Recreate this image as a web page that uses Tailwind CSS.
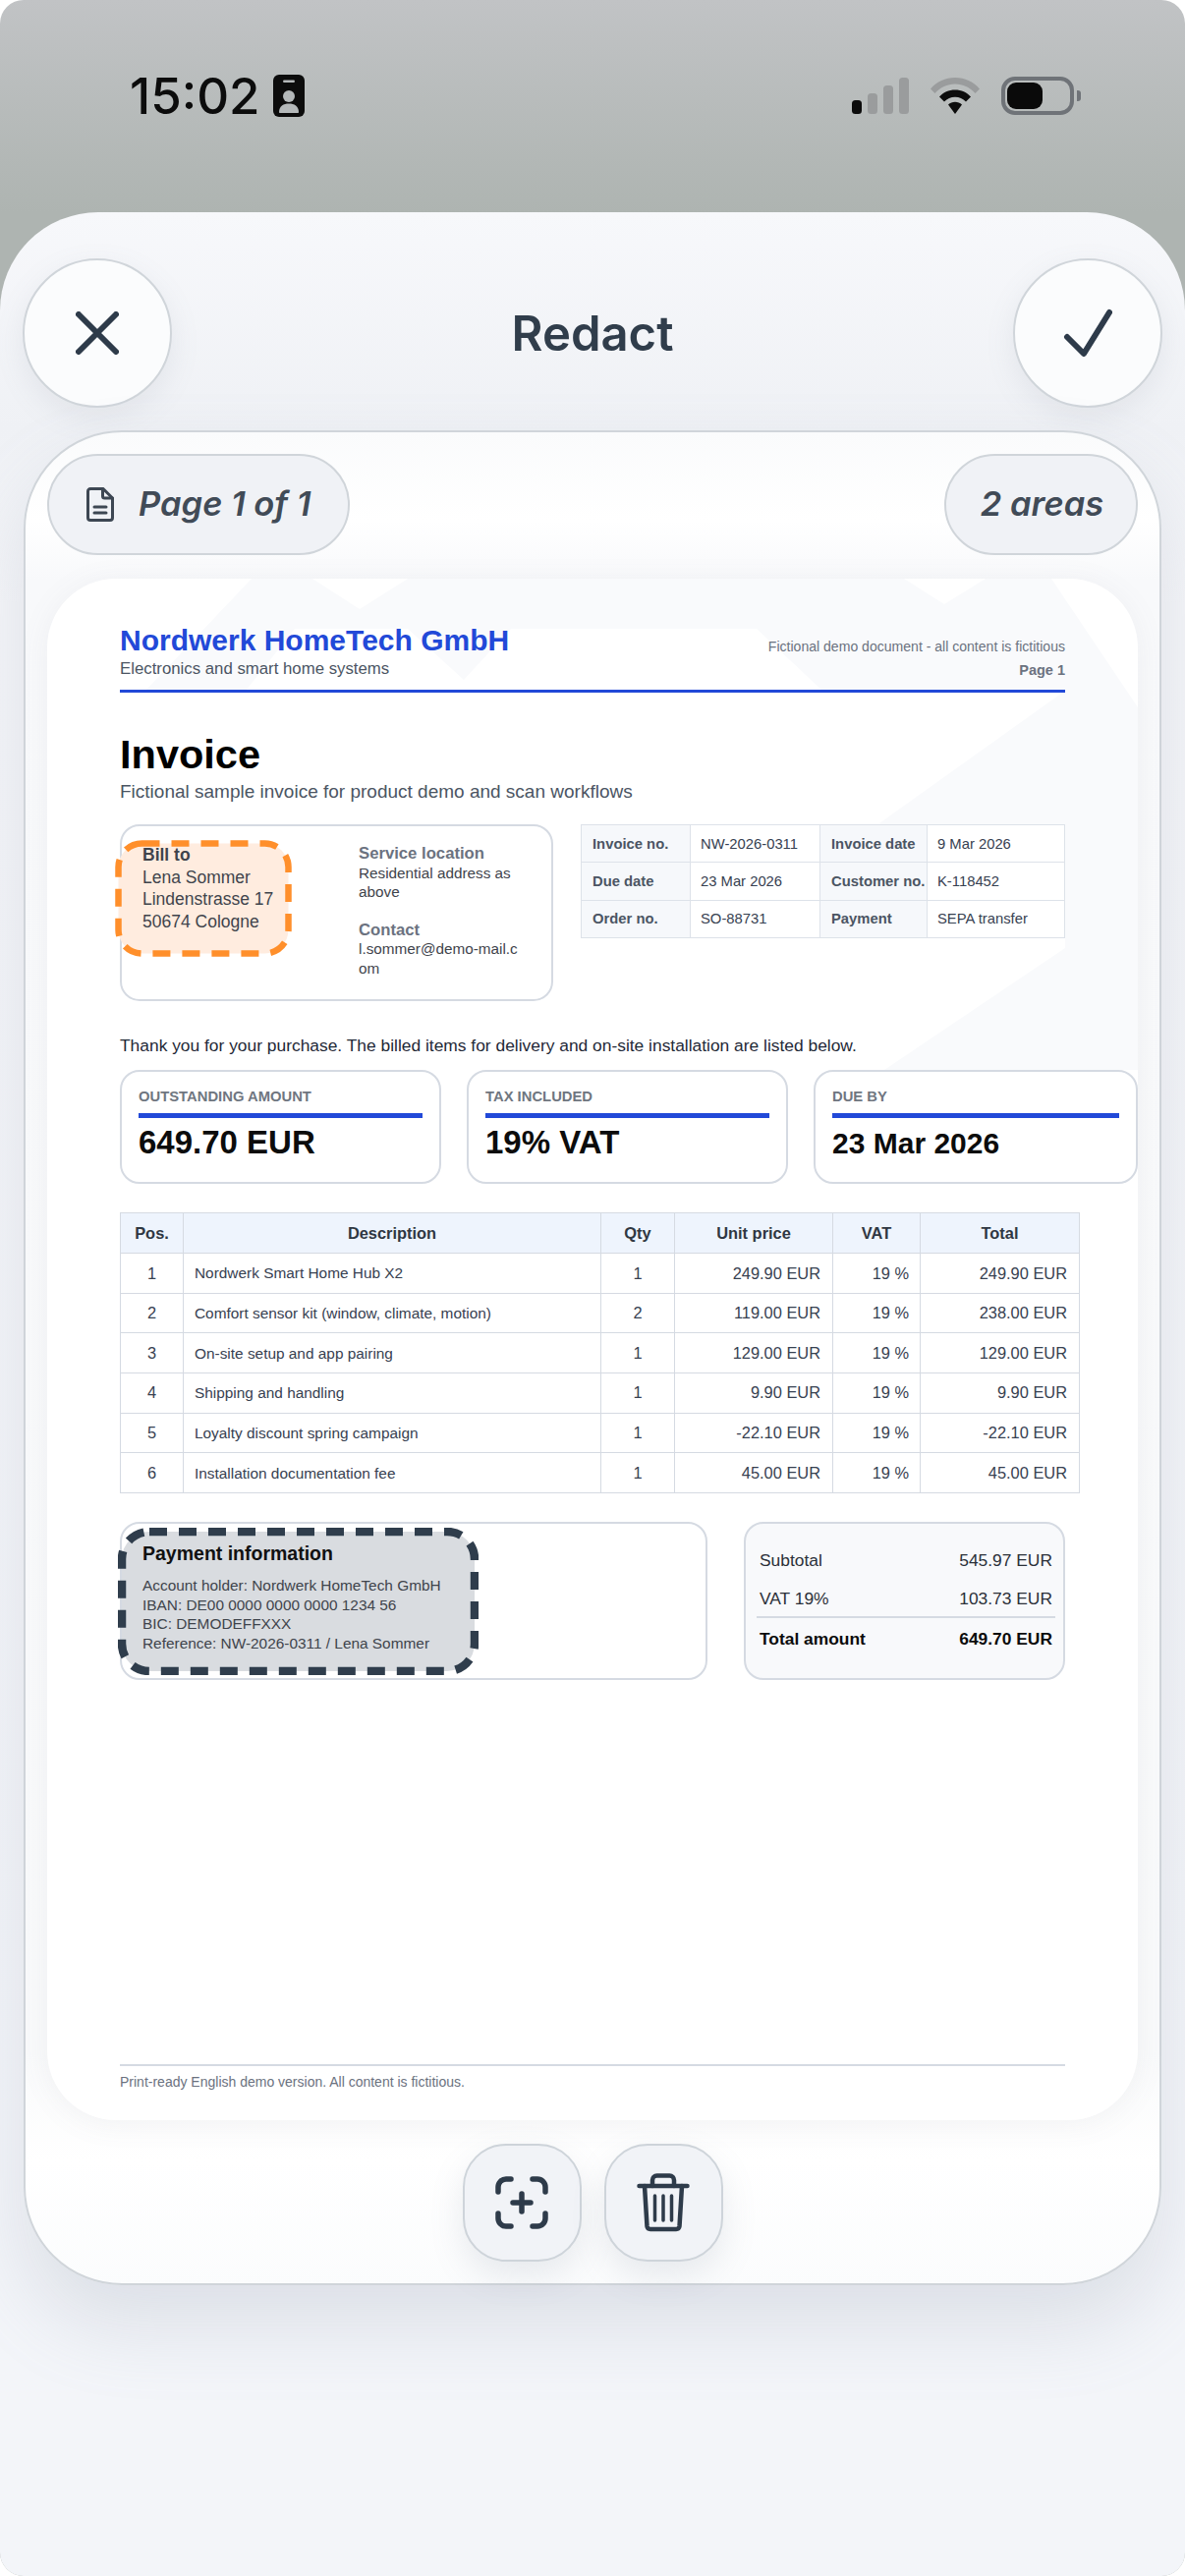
<!DOCTYPE html>
<html lang="en">
  <head>
    <meta charset="UTF-8" />
    <meta name="viewport" content="width=device-width, initial-scale=1.0" />
    <title>Redact</title>
    <script src="https://cdn.jsdelivr.net/npm/@tailwindcss/browser@4"></script>
  </head>
  <body class="bg-white">
    <div class="w-[1206px] h-[2622px] rounded-[24px] overflow-hidden flex flex-col bg-[linear-gradient(180deg,#c1c3c5_0px,#aeb4b1_216px)] font-['Inter',sans-serif]">
      <!-- Status bar -->
      <div class="h-[216px] shrink-0 relative">
        <div class="flex items-center justify-between pl-[132px] pr-[106px] pt-[76px]">
          <div class="flex items-center gap-[13px]">
            <span class="text-[51px] leading-[43px] font-medium text-[#0c0c0c]">15:02</span>
            <svg class="w-[32px] h-[43px]" viewBox="0 0 32 43">
              <rect width="32" height="43" rx="6" fill="#0c0c0c" />
              <rect x="10" y="5.500" width="12" height="2.500" rx="1.200" fill="#b4b8b9" />
              <circle cx="16" cy="22" r="6" fill="#b4b8b9" />
              <path d="M6 38c0-6 4.500-8.500 10-8.500S26 32 26 38c0 .6-.4 1-1 1H7c-.6 0-1-.4-1-1z" fill="#b4b8b9" />
            </svg>
          </div>
          <div class="flex items-center gap-[22px]">
            <svg class="w-[58px] h-[37px]" viewBox="0 0 58 37">
              <rect x="0" y="23" width="10" height="14" rx="3.500" fill="#0c0c0c" />
              <rect x="16" y="16" width="10" height="21" rx="3.500" fill="#9a9c9d" />
              <rect x="32" y="8" width="10" height="29" rx="3.500" fill="#9a9c9d" />
              <rect x="48" y="0" width="10" height="37" rx="3.500" fill="#9a9c9d" />
            </svg>
            <svg class="w-[50px] h-[37px]" viewBox="0 0 50 37">
              <path d="M0 11.500C6.500 4 15 0 25 0s18.500 4 25 11.500l-4.500 4.500C40 10 33 6.500 25 6.500S10 10 4.500 16z" fill="#9a9c9d" />
              <path d="M9 19.500C13 15 18.500 12.500 25 12.500s12 2.500 16 7l-5 5C33 21.500 29.300 19.700 25 19.700s-8 1.800-11 4.800z" fill="#0c0c0c" />
              <path d="M18 27.500c2-1.800 4.300-2.700 7-2.700s5 .9 7 2.700l-7 9.500z" fill="#0c0c0c" />
            </svg>
            <div class="flex items-center gap-[3px]">
              <div class="w-[74px] h-[39px] rounded-[14px] border-[4px] border-[#6f7378] p-[2px]">
                <div class="w-[36px] h-full rounded-[9px] bg-[#0a0a0a]"></div>
              </div>
              <div class="w-[4px] h-[11px] rounded-r-[3px] bg-[#6f7378]"></div>
            </div>
          </div>
        </div>
      </div>

      <!-- Sheet -->
      <div class="flex-1 rounded-t-[100px] bg-[linear-gradient(180deg,#f7f8fb_0px,#eff1f5_220px,#f5f6f9_400px,#f3f5f9_2000px)] px-[24px] flex flex-col">
        <!-- Top bar -->
        <div class="pt-[47px] flex items-center justify-between -mx-[1px]">
          <button class="w-[152px] h-[152px] rounded-full bg-[#fbfcfd] border-[2.500px] border-[#d0d5da] shadow-[0_10px_30px_rgba(120,130,145,0.12)] flex items-center justify-center">
            <svg class="w-[44px] h-[44px]" viewBox="0 0 44 44" fill="none" stroke="#2e3b4a" stroke-width="6" stroke-linecap="round"><path d="M3 3l38 38M41 3L3 41" /></svg>
          </button>
          <h1 class="text-[49px] leading-none font-semibold text-[#303d4b]">Redact</h1>
          <button class="w-[152px] h-[152px] rounded-full bg-[#fbfcfd] border-[2.500px] border-[#d0d5da] shadow-[0_10px_30px_rgba(120,130,145,0.12)] flex items-center justify-center">
            <svg class="w-[50px] h-[50px]" viewBox="0 0 50 50" fill="none" stroke="#2e3b4a" stroke-width="6" stroke-linecap="round" stroke-linejoin="round"><path d="M4 29l17 17L47 4" /></svg>
          </button>
        </div>

        <!-- Card -->
        <div class="mt-[23px] h-[1888px] rounded-[100px] border-[2.500px] border-[#d0d5da] bg-[linear-gradient(180deg,#fafbfc_0px,#ffffff_90px,#f8f9fb_150px,#f9fafb_1650px,#ffffff_1760px,#fbfcfd_1888px)] px-[22px] pt-[22px] shadow-[0_40px_80px_rgba(130,140,160,0.2)] flex flex-col">
          <!-- Pills -->
          <div class="flex items-center justify-between">
            <div class="w-[308px] h-[103px] rounded-full border-[2.500px] border-[#d0d5da] bg-[#f0f2f6] pl-[38px] flex items-center gap-[25px]">
              <svg class="w-[28px] h-[35px]" viewBox="0 0 28 35" fill="none" stroke="#3d4753" stroke-width="3" stroke-linecap="round" stroke-linejoin="round">
                <path d="M4 1.500h13l9.500 9.500v20a2.500 2.500 0 0 1-2.500 2.500H4A2.500 2.500 0 0 1 1.500 31V4A2.500 2.500 0 0 1 4 1.500z" />
                <path d="M16.500 1.500v7.500a2 2 0 0 0 2 2h8" />
                <path d="M8 20h12M8 26h12" />
              </svg>
              <span class="text-[34.500px] leading-none font-semibold italic text-[#414b57]">Page 1 of 1</span>
            </div>
            <div class="w-[197px] h-[103px] rounded-full border-[2.500px] border-[#d0d5da] bg-[#f0f2f6] flex items-center justify-center pl-[2px]">
              <span class="text-[34.500px] leading-none font-semibold italic text-[#414b57]">2 areas</span>
            </div>
          </div>

          <!-- Paper -->
          <div class="relative mt-[24px] h-[1569px] shrink-0 rounded-[70px] overflow-hidden bg-white shadow-[0_4px_30px_rgba(110,115,125,0.08)] font-['Liberation_Sans',Arial,sans-serif]">
            <svg class="absolute inset-0 w-full h-full" viewBox="0 0 1110 1569" fill="#f9fafc">
              <polygon points="208,0 270,0 318,31 367,0 872,0 913,26 955,0 1022,0 1110,131 1110,500 852,500 1036,376 1036,360 847,249 1036,114 789,114 722,51 472,51 424,103 367,51 252,51 202,114 100,114" />
            </svg>
            <div class="relative h-full flex flex-col px-[74px] pt-[45px] pb-[30px]">
              <!-- Invoice head -->
              <div class="flex justify-between border-b-[3px] border-[#2249d8] h-[71px]">
                <div>
                  <div class="text-[30px] leading-[36px] font-bold text-[#2249d8]">Nordwerk HomeTech GmbH</div>
                  <div class="text-[16.800px] leading-[22px] text-[#4b5563]">Electronics and smart home systems</div>
                </div>
                <div class="text-right text-[#6b7280] pt-[15px]">
                  <div class="text-[14.050px] leading-[18px]">Fictional demo document - all content is fictitious</div>
                  <div class="text-[14.500px] leading-[18px] font-bold mt-[6px]">Page 1</div>
                </div>
              </div>

              <h2 class="mt-[39px] text-[41.500px] leading-[48px] font-bold text-black">Invoice</h2>
              <p class="mt-[1px] text-[19px] leading-[26px] text-[#4b5563]">Fictional sample invoice for product demo and scan workflows</p>

              <!-- Bill to + meta -->
              <div class="mt-[20px] flex justify-between">
                <div class="relative w-[441px] h-[180px] rounded-[20px] border-[2px] border-[#d5dae2] flex">
                  <svg class="absolute left-[-7px] top-[14px] w-[180px] h-[119px]" viewBox="0 0 180 119" fill="#ffecdf" stroke="#ff8f2b" stroke-width="6.500" stroke-dasharray="18 12">
                    <rect x="3.500" y="3.500" width="173" height="112" rx="24" />
                  </svg>
                  <div class="relative w-[241px] pl-[21px] pt-[18px] text-[17.500px] leading-[22.500px] text-[#3f444c]">
                    <div class="font-bold">Bill to</div>
                    <div>Lena Sommer</div>
                    <div>Lindenstrasse 17</div>
                    <div>50674 Cologne</div>
                  </div>
                  <div class="w-[166px] pt-[18px] text-[15.300px] leading-[19.500px] text-[#3f444c]">
                    <div class="text-[16.700px] font-bold text-[#6b7280]">Service location</div>
                    <div>Residential address as above</div>
                    <div class="text-[16.700px] font-bold text-[#6b7280] mt-[19px]">Contact</div>
                    <div class="break-all">l.sommer@demo-mail.com</div>
                  </div>
                </div>
                <table class="w-[492px] h-[116px] table-fixed border-collapse text-[14.800px] text-[#374151] self-start">
                  <colgroup><col class="w-[111px]" /><col class="w-[132px]" /><col class="w-[109px]" /><col class="w-[140px]" /></colgroup>
                  <tbody>
                    <tr>
                      <td class="border-[1.500px] border-[#dde2e9] bg-[#f6f8fb] pl-[11px] font-bold text-[#4b5563] whitespace-nowrap">Invoice no.</td>
                      <td class="border-[1.500px] border-[#dde2e9] bg-white pl-[10px]">NW-2026-0311</td>
                      <td class="border-[1.500px] border-[#dde2e9] bg-[#f6f8fb] pl-[11px] font-bold text-[#4b5563] whitespace-nowrap">Invoice date</td>
                      <td class="border-[1.500px] border-[#dde2e9] bg-white pl-[10px]">9 Mar 2026</td>
                    </tr>
                    <tr>
                      <td class="border-[1.500px] border-[#dde2e9] bg-[#f6f8fb] pl-[11px] font-bold text-[#4b5563] whitespace-nowrap">Due date</td>
                      <td class="border-[1.500px] border-[#dde2e9] bg-white pl-[10px]">23 Mar 2026</td>
                      <td class="border-[1.500px] border-[#dde2e9] bg-[#f6f8fb] pl-[11px] font-bold text-[#4b5563] whitespace-nowrap">Customer no.</td>
                      <td class="border-[1.500px] border-[#dde2e9] bg-white pl-[10px]">K-118452</td>
                    </tr>
                    <tr>
                      <td class="border-[1.500px] border-[#dde2e9] bg-[#f6f8fb] pl-[11px] font-bold text-[#4b5563] whitespace-nowrap">Order no.</td>
                      <td class="border-[1.500px] border-[#dde2e9] bg-white pl-[10px]">SO-88731</td>
                      <td class="border-[1.500px] border-[#dde2e9] bg-[#f6f8fb] pl-[11px] font-bold text-[#4b5563] whitespace-nowrap">Payment</td>
                      <td class="border-[1.500px] border-[#dde2e9] bg-white pl-[10px]">SEPA transfer</td>
                    </tr>
                  </tbody>
                </table>
              </div>

              <p class="mt-[33px] text-[17.400px] leading-[24px] text-[#1f2937]">Thank you for your purchase. The billed items for delivery and on-site installation are listed below.</p>

              <!-- Summary cards -->
              <div class="mt-[13px] flex gap-[26px] w-[1036px] shrink-0">
                <div class="w-[327px] h-[116px] rounded-[20px] border-[2px] border-[#d5dae2] bg-white px-[17px] pt-[16px]">
                  <div class="text-[14.800px] leading-[18px] font-bold text-[#6f7680]">OUTSTANDING AMOUNT</div>
                  <div class="mt-[8px] h-[5px] bg-[#2249d8]"></div>
                  <div class="mt-[6px] text-[33px] leading-[38px] font-bold text-[#0c0c0c]">649.70 EUR</div>
                </div>
                <div class="w-[327px] h-[116px] rounded-[20px] border-[2px] border-[#d5dae2] bg-white px-[17px] pt-[16px]">
                  <div class="text-[14.800px] leading-[18px] font-bold text-[#6f7680]">TAX INCLUDED</div>
                  <div class="mt-[8px] h-[5px] bg-[#2249d8]"></div>
                  <div class="mt-[6px] text-[33px] leading-[38px] font-bold text-[#0c0c0c]">19% VAT</div>
                </div>
                <div class="w-[330px] h-[116px] rounded-[20px] border-[2px] border-[#d5dae2] bg-white px-[17px] pt-[16px]">
                  <div class="text-[14.800px] leading-[18px] font-bold text-[#6f7680]">DUE BY</div>
                  <div class="mt-[8px] h-[5px] bg-[#2249d8]"></div>
                  <div class="mt-[7px] text-[30px] leading-[38px] font-bold text-[#0c0c0c]">23 Mar 2026</div>
                </div>
              </div>

              <!-- Items -->
              <table class="mt-[29px] w-[976px] h-[286px] shrink-0 table-fixed border-collapse text-[16.400px] text-[#374151]">
                <colgroup><col class="w-[64px]" /><col class="w-[425px]" /><col class="w-[75px]" /><col class="w-[161px]" /><col class="w-[89px]" /><col class="w-[162px]" /></colgroup>
                <thead>
                  <tr class="bg-[#eef4fd] h-[41px] font-bold text-[#2f3742]">
                    <th class="border-[1.500px] border-[#d5dae2]">Pos.</th>
                    <th class="border-[1.500px] border-[#d5dae2]">Description</th>
                    <th class="border-[1.500px] border-[#d5dae2]">Qty</th>
                    <th class="border-[1.500px] border-[#d5dae2]">Unit price</th>
                    <th class="border-[1.500px] border-[#d5dae2]">VAT</th>
                    <th class="border-[1.500px] border-[#d5dae2]">Total</th>
                  </tr>
                </thead>
                <tbody>
                  <tr>
                    <td class="border-[1.500px] border-[#d5dae2] text-center">1</td>
                    <td class="border-[1.500px] border-[#d5dae2] pl-[11px] text-[15.400px]">Nordwerk Smart Home Hub X2</td>
                    <td class="border-[1.500px] border-[#d5dae2] text-center">1</td>
                    <td class="border-[1.500px] border-[#d5dae2] text-right pr-[12px]">249.90 EUR</td>
                    <td class="border-[1.500px] border-[#d5dae2] text-right pr-[11px]">19 %</td>
                    <td class="border-[1.500px] border-[#d5dae2] text-right pr-[12px]">249.90 EUR</td>
                  </tr>
                  <tr>
                    <td class="border-[1.500px] border-[#d5dae2] text-center">2</td>
                    <td class="border-[1.500px] border-[#d5dae2] pl-[11px] text-[15.400px]">Comfort sensor kit (window, climate, motion)</td>
                    <td class="border-[1.500px] border-[#d5dae2] text-center">2</td>
                    <td class="border-[1.500px] border-[#d5dae2] text-right pr-[12px]">119.00 EUR</td>
                    <td class="border-[1.500px] border-[#d5dae2] text-right pr-[11px]">19 %</td>
                    <td class="border-[1.500px] border-[#d5dae2] text-right pr-[12px]">238.00 EUR</td>
                  </tr>
                  <tr>
                    <td class="border-[1.500px] border-[#d5dae2] text-center">3</td>
                    <td class="border-[1.500px] border-[#d5dae2] pl-[11px] text-[15.400px]">On-site setup and app pairing</td>
                    <td class="border-[1.500px] border-[#d5dae2] text-center">1</td>
                    <td class="border-[1.500px] border-[#d5dae2] text-right pr-[12px]">129.00 EUR</td>
                    <td class="border-[1.500px] border-[#d5dae2] text-right pr-[11px]">19 %</td>
                    <td class="border-[1.500px] border-[#d5dae2] text-right pr-[12px]">129.00 EUR</td>
                  </tr>
                  <tr>
                    <td class="border-[1.500px] border-[#d5dae2] text-center">4</td>
                    <td class="border-[1.500px] border-[#d5dae2] pl-[11px] text-[15.400px]">Shipping and handling</td>
                    <td class="border-[1.500px] border-[#d5dae2] text-center">1</td>
                    <td class="border-[1.500px] border-[#d5dae2] text-right pr-[12px]">9.90 EUR</td>
                    <td class="border-[1.500px] border-[#d5dae2] text-right pr-[11px]">19 %</td>
                    <td class="border-[1.500px] border-[#d5dae2] text-right pr-[12px]">9.90 EUR</td>
                  </tr>
                  <tr>
                    <td class="border-[1.500px] border-[#d5dae2] text-center">5</td>
                    <td class="border-[1.500px] border-[#d5dae2] pl-[11px] text-[15.400px]">Loyalty discount spring campaign</td>
                    <td class="border-[1.500px] border-[#d5dae2] text-center">1</td>
                    <td class="border-[1.500px] border-[#d5dae2] text-right pr-[12px]">-22.10 EUR</td>
                    <td class="border-[1.500px] border-[#d5dae2] text-right pr-[11px]">19 %</td>
                    <td class="border-[1.500px] border-[#d5dae2] text-right pr-[12px]">-22.10 EUR</td>
                  </tr>
                  <tr>
                    <td class="border-[1.500px] border-[#d5dae2] text-center">6</td>
                    <td class="border-[1.500px] border-[#d5dae2] pl-[11px] text-[15.400px]">Installation documentation fee</td>
                    <td class="border-[1.500px] border-[#d5dae2] text-center">1</td>
                    <td class="border-[1.500px] border-[#d5dae2] text-right pr-[12px]">45.00 EUR</td>
                    <td class="border-[1.500px] border-[#d5dae2] text-right pr-[11px]">19 %</td>
                    <td class="border-[1.500px] border-[#d5dae2] text-right pr-[12px]">45.00 EUR</td>
                  </tr>
                </tbody>
              </table>

              <!-- Payment + totals -->
              <div class="mt-[29px] flex justify-between">
                <div class="relative w-[598px] h-[161px] rounded-[20px] border-[2px] border-[#d5dae2]">
                  <svg class="absolute left-[-4px] top-[4px] w-[367px] h-[150px]" viewBox="0 0 367 150" fill="#d9dce0" stroke="#2f3d4c" stroke-width="8.500" stroke-dasharray="18 12">
                    <rect x="4" y="4" width="359" height="142" rx="28" />
                  </svg>
                  <div class="relative pl-[21px] pt-[18px] text-[15.400px] leading-[19.500px] text-[#3f444c]">
                    <div class="text-[19.500px] leading-[24px] font-bold text-[#111]">Payment information</div>
                    <div class="mt-[11px]">Account holder: Nordwerk HomeTech GmbH</div>
                    <div>IBAN: DE00 0000 0000 0000 1234 56</div>
                    <div>BIC: DEMODEFFXXX</div>
                    <div>Reference: NW-2026-0311 / Lena Sommer</div>
                  </div>
                </div>
                <div class="w-[327px] h-[161px] rounded-[20px] border-[2px] border-[#d5dae2] bg-[#f8f9fb] pl-[11px] pr-[8px] pt-[25px] text-[17.400px] leading-[24px] text-[#2b3038]">
                  <div class="flex justify-between px-[3px]"><span>Subtotal</span><span>545.97 EUR</span></div>
                  <div class="flex justify-between px-[3px] mt-[15px] pb-[6px] border-b-[2px] border-[#d5dae2]"><span>VAT 19%</span><span>103.73 EUR</span></div>
                  <div class="flex justify-between px-[3px] mt-[9px] font-bold text-[#0c0c0c]"><span>Total amount</span><span>649.70 EUR</span></div>
                </div>
              </div>

              <!-- Footer -->
              <div class="mt-auto border-t-[2px] border-[#d5dae2] pt-[7px] text-[14px] leading-[18px] text-[#6b7280]">Print-ready English demo version. All content is fictitious.</div>
            </div>
          </div>

          <!-- Actions -->
          <div class="mt-[24px] flex justify-center gap-[23px]">
            <button class="w-[121px] h-[120px] rounded-[44px] border-[2.500px] border-[#ced4da] bg-[#f1f3f7] shadow-[0_14px_34px_rgba(120,130,150,0.16)] flex items-center justify-center">
              <svg class="w-[54px] h-[54px]" viewBox="0 0 54 54" fill="none" stroke="#2e3b4a" stroke-width="5.500" stroke-linecap="round" stroke-linejoin="round">
                <path d="M3 16V11a8 8 0 0 1 8-8h5M38 3h5a8 8 0 0 1 8 8v5M51 38v5a8 8 0 0 1-8 8h-5M16 51h-5a8 8 0 0 1-8-8v-5" />
                <path d="M27 18v18M18 27h18" />
              </svg>
            </button>
            <button class="w-[121px] h-[120px] rounded-[44px] border-[2.500px] border-[#ced4da] bg-[#f1f3f7] shadow-[0_14px_34px_rgba(120,130,150,0.16)] flex items-center justify-center">
              <svg class="w-[54px] h-[60px]" viewBox="0 0 54 60" fill="none" stroke="#2e3b4a" stroke-width="4.500" stroke-linecap="round" stroke-linejoin="round">
                <path d="M2.500 13h49" />
                <path d="M16 13V7a4.500 4.500 0 0 1 4.500-4.500h13A4.500 4.500 0 0 1 38 7v6" />
                <path d="M8 13l2.500 41a3.500 3.500 0 0 0 3.500 3h26a3.500 3.500 0 0 0 3.500-3L46 13" />
                <path d="M18.500 23v25M27 23v25M35.500 23v25" stroke-width="3.500" />
              </svg>
            </button>
          </div>
        </div>
      </div>
    </div>
  </body>
</html>
